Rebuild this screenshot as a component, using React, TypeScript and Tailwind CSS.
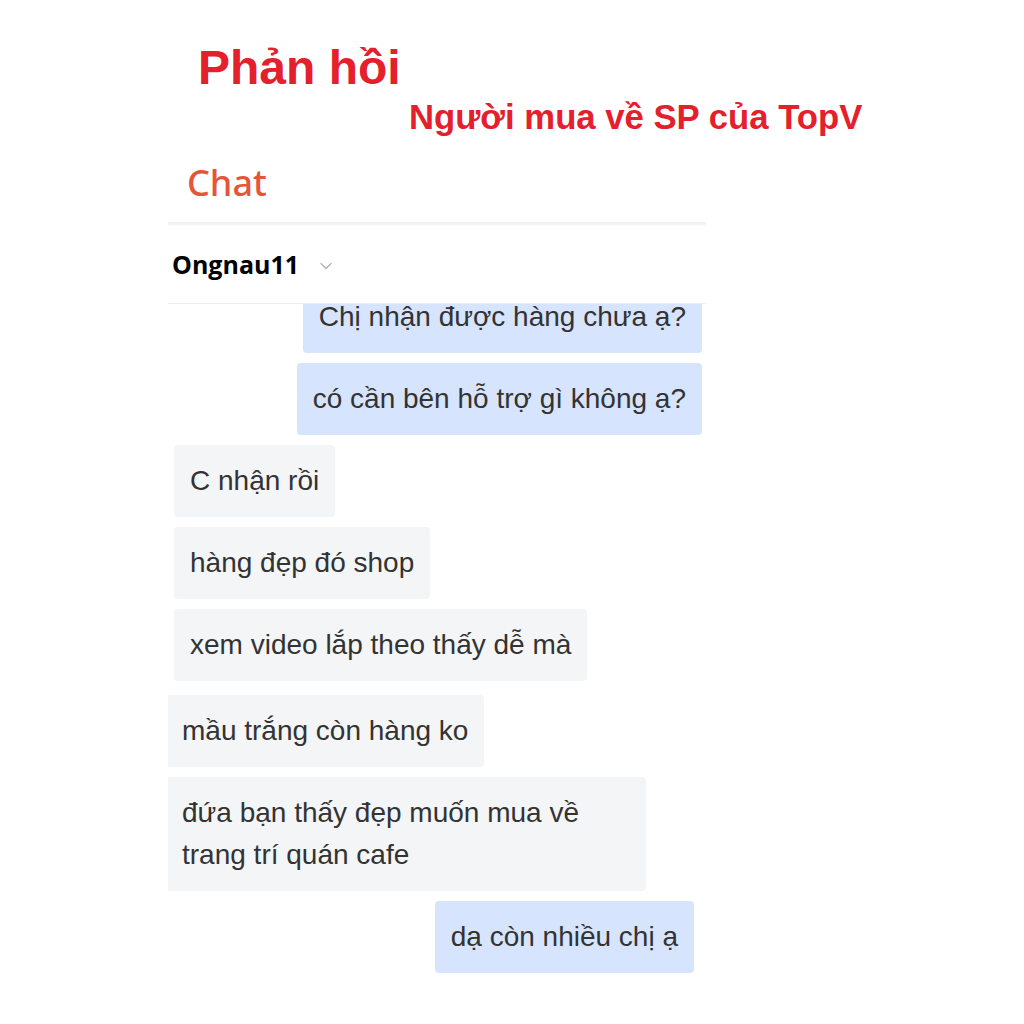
import { ChevronDown } from "lucide-react"

interface Message {
  id: number
  text: string
  mine: boolean
  className: string
}

const messages: Message[] = [
  { id: 1, text: "Chị nhận được hàng chưa ạ?", mine: true, className: "mr-[4px] -mt-[23px]" },
  { id: 2, text: "có cần bên hỗ trợ gì không ạ?", mine: true, className: "mr-[4px] mt-[10px]" },
  { id: 3, text: "C nhận rồi", mine: false, className: "ml-[6px] mt-[10px]" },
  { id: 4, text: "hàng đẹp đó shop", mine: false, className: "ml-[6px] mt-[10px]" },
  { id: 5, text: "xem video lắp theo thấy dễ mà", mine: false, className: "ml-[6px] mt-[10px]" },
  { id: 6, text: "mầu trắng còn hàng ko", mine: false, className: "-ml-[2px] mt-[14px]" },
  { id: 7, text: "đứa bạn thấy đẹp muốn mua về trang trí quán cafe", mine: false, className: "-ml-[2px] mt-[10px] w-[480px]" },
  { id: 8, text: "dạ còn nhiều chị ạ", mine: true, className: "mr-[12px] mt-[10px]" },
]

export default function App() {
  return (
    <div className="h-[1024px] w-[1024px] overflow-hidden bg-white">
      <div className="pl-[198px] pt-[38px]">
        <h1 className="text-[48px] font-bold leading-[60px] text-[#e3202b]" style={{ fontFamily: '"Liberation Sans", Arial, sans-serif' }}>
          Phản hồi
        </h1>
      </div>
      <div className="pl-[409px]">
        <h2 className="text-[34.7px] font-bold leading-[38px] text-[#e3202b]" style={{ fontFamily: '"Liberation Sans", Arial, sans-serif' }}>
          Người mua về SP của TopV
        </h2>
      </div>

      <div className="ml-[168px] w-[538px]">
        <div className="pl-[19px] pt-[24px] pb-[16px]">
          <span className="text-[36px] font-medium leading-[46px] text-[#e4553a]" style={{ fontFamily: '"Noto Sans", sans-serif' }}>
            Chat
          </span>
        </div>
        <div className="h-[4px] bg-gradient-to-b from-[#eeeeee] to-[#fbfbfb]" />

        <div className="flex h-[78px] items-center border-b border-[#eeeeee] pl-[4px]">
          <span className="text-[25px] font-bold text-black" style={{ fontFamily: '"Open Sans", sans-serif' }}>
            Ongnau11
          </span>
          <ChevronDown className="ml-[17px] mt-[3px] h-[20px] w-[20px] text-[#b0b0b0]" strokeWidth={1.5} />
        </div>

        <div className="flex h-[700px] flex-col overflow-hidden" style={{ fontFamily: '"Liberation Sans", Arial, sans-serif' }}>
          {messages.map((m) => (
            <div
              key={m.id}
              className={`${m.mine ? "self-end bg-[#d6e4fd]" : "self-start bg-[#f4f5f7]"} ${m.className} rounded-[4px] px-[16px] py-[15px] text-[28px] leading-[42px] text-[#333333]`}
            >
              {m.text}
            </div>
          ))}
        </div>
      </div>
    </div>
  )
}
